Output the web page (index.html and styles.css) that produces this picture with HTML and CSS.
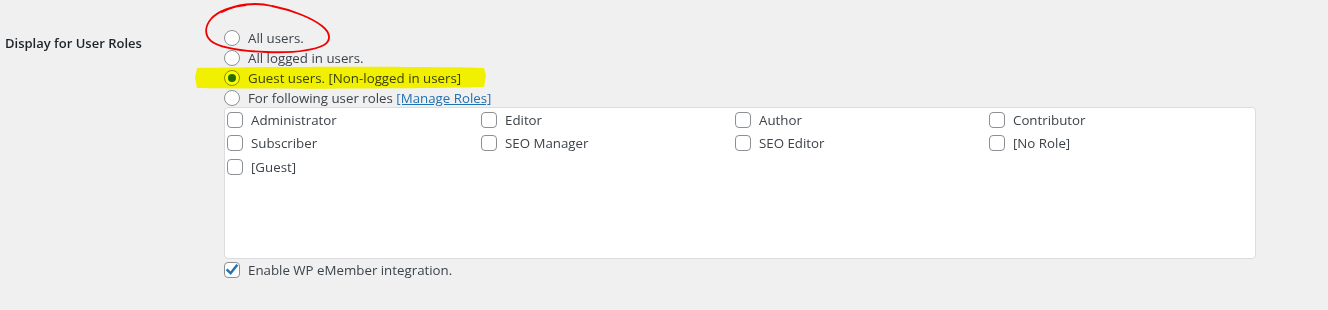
FILE: index.html
```html
<!DOCTYPE html>
<html lang="en">
<head>
    <meta charset="UTF-8">
    <meta name="viewport" content="width=device-width, initial-scale=1.0">
    <title>Display for User Roles</title>
    <link rel="stylesheet" href="styles.css">
</head>
<body>
    <div class="settings">
        <div class="form-row">
            <div class="row-label">Display for User Roles</div>
            <div class="row-field">
                <div class="radio-list">
                    <label class="radio-item"><span class="radio"></span><span>All users.</span></label>
                    <label class="radio-item"><span class="radio"></span><span>All logged in users.</span></label>
                    <label class="radio-item"><span class="radio checked"></span><span>Guest users. [Non-logged in users]</span></label>
                    <label class="radio-item"><span class="radio"></span><span>For following user roles <a href="#" class="link">[Manage Roles]</a></span></label>
                </div>
                <div class="roles-box">
                    <label class="check-item"><span class="check"></span>Administrator</label>
                    <label class="check-item"><span class="check"></span>Editor</label>
                    <label class="check-item"><span class="check"></span>Author</label>
                    <label class="check-item"><span class="check"></span>Contributor</label>
                    <label class="check-item"><span class="check"></span>Subscriber</label>
                    <label class="check-item"><span class="check"></span>SEO Manager</label>
                    <label class="check-item"><span class="check"></span>SEO Editor</label>
                    <label class="check-item"><span class="check"></span>[No Role]</label>
                    <label class="check-item"><span class="check"></span>[Guest]</label>
                </div>
                <label class="check-item emember">
                    <span class="check">
                        <svg width="14" height="14" viewBox="0 0 14 14"><path d="M2.5 7.2 L5.6 10.3 L11.6 2.6" fill="none" stroke="#2271b1" stroke-width="2.4" stroke-linecap="square"/></svg>
                    </span>Enable WP eMember integration.
                </label>
            </div>
        </div>

        <!-- hand drawn marks on top of the screenshot -->
        <svg class="marks" width="1328" height="310" viewBox="0 0 1328 310">
            <path class="highlight" d="M197 68 C260 67 400 66 484 68 L486 76 L484 87 C400 89 260 89 197 88 L195 78 Z"/>
            <path class="circle" d="M222 12 C236 4 256 2 272 6 C292 10 312 18 322 26 C331 33 331 41 324 45 C312 51 292 53 266 52 C240 51 220 48 211 41 C204 35 205 26 211 19 C218 11 232 6 246 5"/>
        </svg>
    </div>
</body>
</html>
```

FILE: styles.css
```css
body {
    margin: 0;
    background-color: #f0f0f1;
    font-family: "Open Sans", "Noto Sans", sans-serif;
    font-size: 13px;
    color: #3c434a;
}
.settings {
    position: relative;
    width: 1328px;
    height: 310px;
}
.form-row {
    display: flex;
    padding-left: 5px;
}
.row-label {
    width: 219px;
    padding-top: 33px;
    line-height: 20px;
    font-weight: 600;
    color: #1d2327;
}
.row-field {
    padding-top: 28px;
    font-size: 13.3px;
}
.radio-item, .check-item {
    display: flex;
    align-items: center;
    gap: 8px;
    height: 20px;
    line-height: 20px;
}
.radio {
    width: 16px;
    height: 16px;
    box-sizing: border-box;
    border: 1px solid #8c8f94;
    border-radius: 50%;
    background-color: #fff;
    display: flex;
    align-items: center;
    justify-content: center;
}
.radio.checked::after {
    content: "";
    width: 8px;
    height: 8px;
    border-radius: 50%;
    background-color: #2271b1;
}
.link {
    color: #2271b1;
    text-decoration: underline;
}
.roles-box {
    margin-top: -1px;
    width: 1032px;
    height: 152px;
    box-sizing: border-box;
    border: 1px solid #dcdcde;
    border-radius: 4px;
    background-color: #fff;
    padding: 0 2px;
    display: grid;
    grid-template-columns: repeat(4, 254px);
    grid-auto-rows: 23.5px;
    align-content: start;
}
.roles-box .check-item {
    height: 23.5px;
}
.check {
    width: 16px;
    height: 16px;
    box-sizing: border-box;
    border: 1px solid #8c8f94;
    border-radius: 4px;
    background-color: #fff;
    display: flex;
    align-items: center;
    justify-content: center;
}
.emember {
    margin-top: 1px;
}
.marks {
    position: absolute;
    left: 0;
    top: 0;
    pointer-events: none;
}
.highlight {
    fill: #ffff00;
    mix-blend-mode: multiply;
}
.circle {
    fill: none;
    stroke: #f00000;
    stroke-width: 1.8;
    stroke-linecap: round;
}
```
